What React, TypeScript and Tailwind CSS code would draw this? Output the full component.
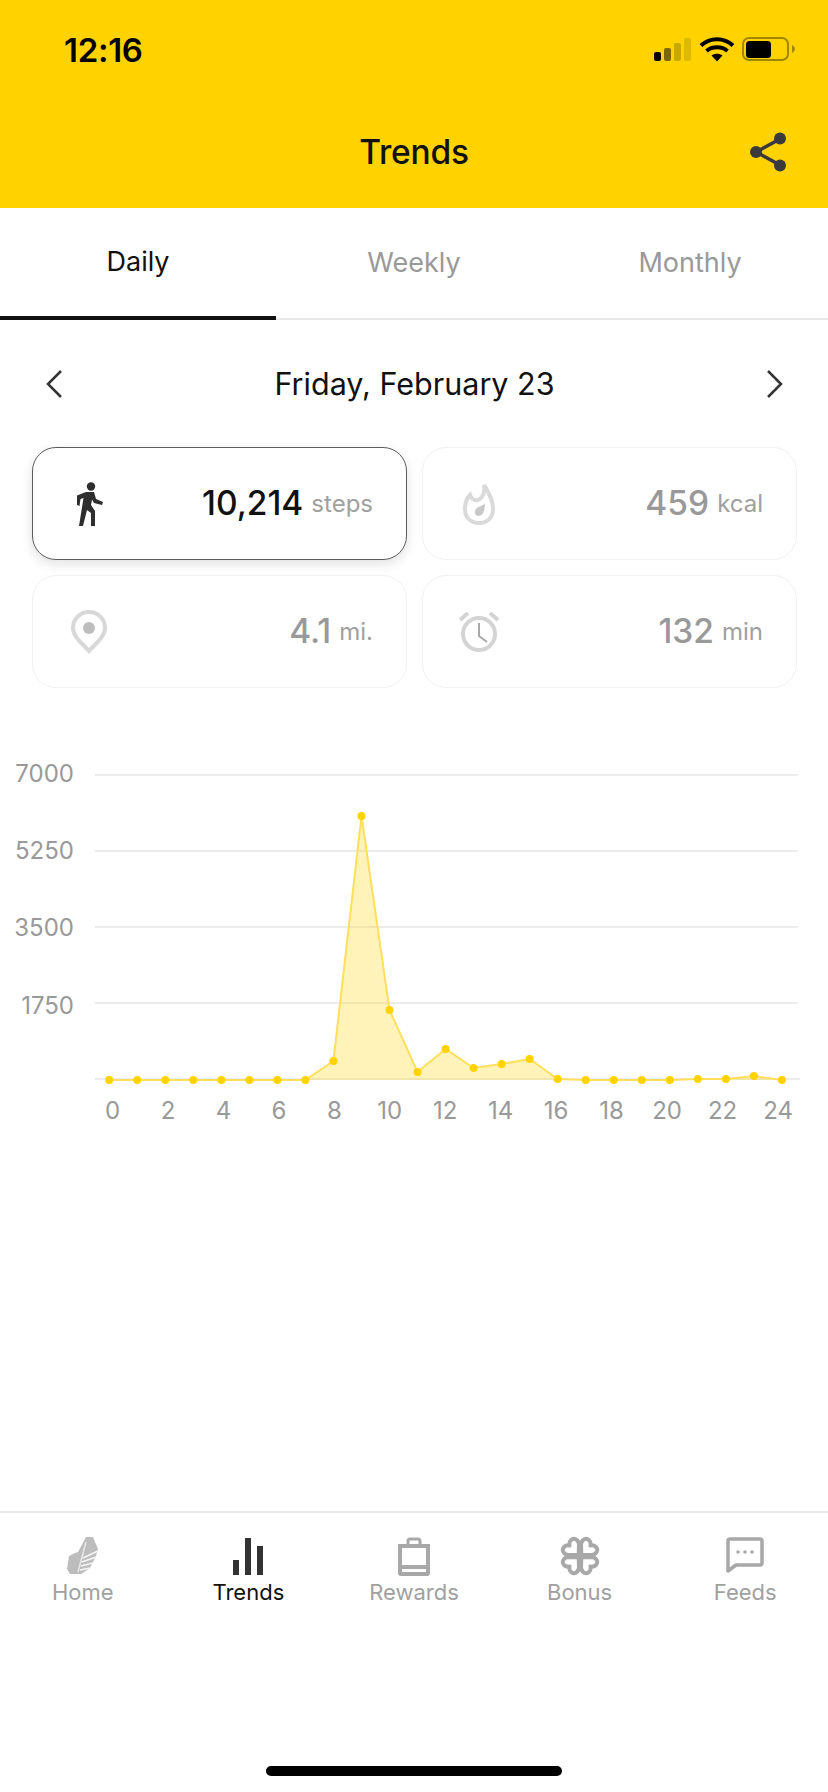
import React from 'react';

const yellow = 'bg-[#ffd200]';

// chart points, y is in the chart's own coordinates
const ys = [330, 330, 330, 330, 330, 330, 330, 330, 311, 66, 260, 322, 299, 318, 314, 309, 329, 330, 330, 330, 330, 329, 329, 326, 330];
const xAt = (i: number) => 109.2 + i * 28.03;
const line = ys.map((y, i) => `${xAt(i).toFixed(1)},${y}`).join(' ');
const yLabels = [
  { label: '7000', y: 25, textY: 32 },
  { label: '5250', y: 101, textY: 109 },
  { label: '3500', y: 177, textY: 186 },
  { label: '1750', y: 253, textY: 264 },
];

function StatusBar() {
  return (
    <div className="flex h-[100px] items-start justify-between pl-[64px] pr-[32px] pt-[31px]">
      <span className="text-[33px] leading-[38px] font-semibold tracking-[-0.3px] text-black">12:16</span>
      <svg width="142" height="26" viewBox="0 0 142 26" className="mt-[6px]">
        <rect x="0" y="15" width="7" height="9" rx="2" fill="#000" />
        <rect x="10" y="11" width="7" height="13" rx="2" fill="#7d6700" />
        <rect x="20" y="6" width="7" height="18" rx="2" fill="#c9a800" />
        <rect x="30" y="1" width="7" height="23" rx="2" fill="#dfb900" />
        <path d="M47 8.5 C56 0 70 0 79 8.5" stroke="#000" strokeWidth="4" fill="none" />
        <path d="M52.5 14 C58 9 68 9 73.5 14" stroke="#000" strokeWidth="4" fill="none" />
        <path d="M57.5 18.5 L63 24.5 L68.5 18.5 C65 16 61 16 57.5 18.5 Z" fill="#000" />
        <rect x="89" y="1" width="45" height="22" rx="6" fill="none" stroke="#a18600" strokeWidth="2" />
        <rect x="92" y="4" width="25" height="17" rx="3.5" fill="#000" />
        <path d="M138 8 C140 9 141 11 141 12 C141 13 140 15 138 16 Z" fill="#a18600" />
      </svg>
    </div>
  );
}

function ShareIcon() {
  return (
    <svg width="38" height="40" viewBox="0 0 38 40" className="text-[#3a3a3a]">
      <path d="M31 7 L7 20 L31 33" stroke="currentColor" strokeWidth="3.5" fill="none" />
      <circle cx="31" cy="6.5" r="6" fill="currentColor" />
      <circle cx="7" cy="20" r="6" fill="currentColor" />
      <circle cx="31" cy="33.5" r="6" fill="currentColor" />
    </svg>
  );
}

function Walker() {
  return (
    <svg width="27" height="44" viewBox="0 0 27 44" fill="#2e2e2e">
      <circle cx="15" cy="4.5" r="4.2" />
      <path d="M10 10 L18 10 L20 17 L27 20 L26 23 L18 21 L16 17.5 L15 23 L19 29 L19 44 L15 44 L15 31 L11 28 L7 44 L3 44 L7.5 16 L4.5 17 L3.5 24 L1 23 L1 13.5 Z" />
    </svg>
  );
}

function Flame() {
  return (
    <svg width="32" height="42" viewBox="0 0 32 42">
      <path
        d="M21 2 C24 8 30 14 30 26 C30 35 24 40 16 40 C8 40 2 35 2 26 C2 20 4 15 7 12 C8 16 12 18 15 17 C20 15 22 9 21 2 Z"
        fill="none"
        stroke="#dadada"
        strokeWidth="4"
      />
      <path d="M22 20 C22 28 20 33 15 33 C11 33 11 27 14 25 C17 23 20 23 22 20 Z" fill="#c8c8c8" />
    </svg>
  );
}

function Pin() {
  return (
    <svg width="36" height="44" viewBox="0 0 36 44">
      <path
        d="M18 41 C12 34 2 27 2 18 C2 9 9 2 18 2 C27 2 34 9 34 18 C34 27 24 34 18 41 Z"
        fill="none"
        stroke="#d8d8d8"
        strokeWidth="4"
      />
      <circle cx="18" cy="18" r="6" fill="#bdbdbd" />
    </svg>
  );
}

function Alarm() {
  return (
    <svg width="40" height="40" viewBox="0 0 40 40">
      <circle cx="20" cy="22" r="16" fill="none" stroke="#d4d4d4" strokeWidth="4" />
      <path d="M1 8 L9 1" stroke="#d4d4d4" strokeWidth="4" />
      <path d="M39 8 L31 1" stroke="#d4d4d4" strokeWidth="4" />
      <path d="M20 11 L20 24 L28 30" fill="none" stroke="#a8a8a8" strokeWidth="2" />
    </svg>
  );
}

function StatCard({ icon, value, unit, active }: { icon: React.ReactNode; value: string; unit: string; active?: boolean }) {
  return (
    <div
      className={
        active
          ? 'flex h-[113px] items-center justify-between rounded-[24px] border border-[#5c5c5c] bg-white pl-[36px] pr-[33px] shadow-[0_4px_12px_rgba(0,0,0,0.12)]'
          : 'flex h-[113px] items-center justify-between rounded-[24px] border border-[#f1f1f1] bg-white pl-[36px] pr-[33px]'
      }
    >
      <div className="flex w-[40px] justify-center">{icon}</div>
      <div className="flex items-center gap-[8px]">
        <span className={active ? 'text-[33.5px] font-medium text-[#111]' : 'text-[33.5px] font-medium text-[#999]'}>{value}</span>
        <span className="text-[24px] text-[#a0a0a0]">{unit}</span>
      </div>
    </div>
  );
}

function Chart() {
  return (
    <svg width="828" height="380" viewBox="0 0 828 380" className="mt-[62px] block">
      {yLabels.map((l) => (
        <g key={l.label}>
          <line x1="95" x2="798" y1={l.y} y2={l.y} stroke="#ececec" strokeWidth="2" />
          <text x="74" y={l.textY} textAnchor="end" fontSize="24" fill="#999">
            {l.label}
          </text>
        </g>
      ))}
      <line x1="95" x2="800" y1="329" y2="329" stroke="#ececec" strokeWidth="2" />
      <polygon points={`${xAt(0)},330 ${line} ${xAt(24)},330`} fill="#ffd200" fillOpacity="0.27" />
      <polyline points={line} fill="none" stroke="#ffdf5c" strokeWidth="2" />
      {ys.map((y, i) => (
        <circle key={i} cx={xAt(i)} cy={y} r="4" fill="#ffd200" />
      ))}
      {Array.from({ length: 13 }).map((_, i) => (
        <text key={i} x={112.5 + i * 55.46} y="369" textAnchor="middle" fontSize="24" fill="#999">
          {i * 2}
        </text>
      ))}
    </svg>
  );
}

function ShoeIcon() {
  return (
    <svg width="34" height="40" viewBox="0 0 34 40">
      <path d="M20 1 L27 1 L32 13 L30 20 L24 32 L15 38 L4 38 L1 33 L3 20 L9 17 L12 16 Z" fill="#bdbdbd" />
      <path d="M12 36 L20 6" stroke="#e8e8e8" strokeWidth="1.5" />
      <path d="M17 22 L32 15 M16 26 L30 21 M15 30 L27 27 M14 34 L24 32" stroke="#f6f6f6" strokeWidth="1.5" />
    </svg>
  );
}

function TrendsIcon() {
  return (
    <svg width="30" height="37" viewBox="0 0 30 37" fill="#333">
      <rect x="0" y="22" width="6" height="15" />
      <rect x="12" y="0" width="6" height="37" />
      <rect x="24" y="8" width="6" height="29" />
    </svg>
  );
}

function BagIcon() {
  return (
    <svg width="34" height="39" viewBox="0 0 34 39" fill="none" stroke="#a8a8a8" strokeWidth="4">
      <path d="M3 9 H31 V36 Q31 37 30 37 H4 Q3 37 3 36 Z" />
      <path d="M11 9 V4 Q11 2 13 2 H21 Q23 2 23 4 V9" strokeWidth="3" />
      <path d="M3 30 H31" />
    </svg>
  );
}

// one heart shaped leaf with its tip at the middle of the clover
const leaf = 'M0 -2 L-7.5 -9 C-11 -13 -9 -18 -5 -18 C-3 -18 -1 -17 0 -15 C1 -17 3 -18 5 -18 C9 -18 11 -13 7.5 -9 Z';

function CloverIcon() {
  return (
    <svg width="40" height="40" viewBox="0 0 40 40" fill="none" stroke="#a8a8a8" strokeWidth="4" strokeLinejoin="round">
      <path d={leaf} transform="translate(20 20) rotate(45) scale(0.98)" />
      <path d={leaf} transform="translate(20 20) rotate(135) scale(0.98)" />
      <path d={leaf} transform="translate(20 20) rotate(225) scale(0.98)" />
      <path d={leaf} transform="translate(20 20) rotate(315) scale(0.98)" />
    </svg>
  );
}

function ChatIcon() {
  return (
    <svg width="38" height="38" viewBox="0 0 38 38" fill="none">
      <path d="M2 34 V4 Q2 2 4 2 H34 Q36 2 36 4 V26 Q36 28 34 28 H10 Z" stroke="#a8a8a8" strokeWidth="3.5" strokeLinejoin="round" />
      <circle cx="12" cy="15" r="1.8" fill="#a8a8a8" />
      <circle cx="19" cy="15" r="1.8" fill="#a8a8a8" />
      <circle cx="26" cy="15" r="1.8" fill="#a8a8a8" />
    </svg>
  );
}

const navItems = [
  { label: 'Home', icon: <ShoeIcon /> },
  { label: 'Trends', icon: <TrendsIcon />, active: true },
  { label: 'Rewards', icon: <BagIcon /> },
  { label: 'Bonus', icon: <CloverIcon /> },
  { label: 'Feeds', icon: <ChatIcon /> },
];

export default function App() {
  return (
    <div className="flex h-[1792px] w-[828px] flex-col bg-white font-['Inter',sans-serif]">
      <div className={`${yellow} h-[208px]`}>
        <StatusBar />
        <div className="relative flex h-[104px] items-center justify-center">
          <span className="text-[33.5px] font-medium tracking-[-0.2px] text-[#111]">Trends</span>
          <div className="absolute right-[41px] top-[32px]">
            <ShareIcon />
          </div>
        </div>
      </div>

      <div className="grid h-[112px] grid-cols-3 text-[27px]">
        <div className="flex items-center justify-center border-b-4 border-[#111] text-[#111]">Daily</div>
        <div className="flex items-center justify-center border-b-2 border-[#e8e8e8] text-[#999]">Weekly</div>
        <div className="flex items-center justify-center border-b-2 border-[#e8e8e8] text-[#999]">Monthly</div>
      </div>

      <div className="flex h-[127px] items-center justify-between pl-[46px] pr-[45px]">
        <svg width="16" height="28" viewBox="0 0 16 28" fill="none" stroke="#333" strokeWidth="2.5">
          <path d="M15 1 L2 14 L15 27" />
        </svg>
        <span className="text-[30.5px] text-[#111]">Friday, February 23</span>
        <svg width="16" height="28" viewBox="0 0 16 28" fill="none" stroke="#333" strokeWidth="2.5">
          <path d="M1 1 L14 14 L1 27" />
        </svg>
      </div>

      <div className="grid grid-cols-2 gap-[15px] pl-[32px] pr-[31px]">
        <StatCard icon={<Walker />} value="10,214" unit="steps" active />
        <StatCard icon={<Flame />} value="459" unit="kcal" />
        <StatCard icon={<Pin />} value="4.1" unit="mi." />
        <StatCard icon={<Alarm />} value="132" unit="min" />
      </div>

      <Chart />

      <div className="flex-1" />

      <div className="grid h-[112px] grid-cols-5 border-t-2 border-[#e8e8e8]">
        {navItems.map((item) => (
          <div key={item.label} className="flex flex-col items-center pt-[23px]">
            <div className="flex h-[40px] items-center justify-center">{item.icon}</div>
            <span className={item.active ? 'mt-[3px] text-[22px] leading-[26px] text-[#111]' : 'mt-[3px] text-[22px] leading-[26px] text-[#a0a0a0]'}>
              {item.label}
            </span>
          </div>
        ))}
      </div>

      <div className="flex h-[169px] items-end justify-center pb-[16px]">
        <div className="h-[10px] w-[296px] rounded-full bg-black" />
      </div>
    </div>
  );
}
